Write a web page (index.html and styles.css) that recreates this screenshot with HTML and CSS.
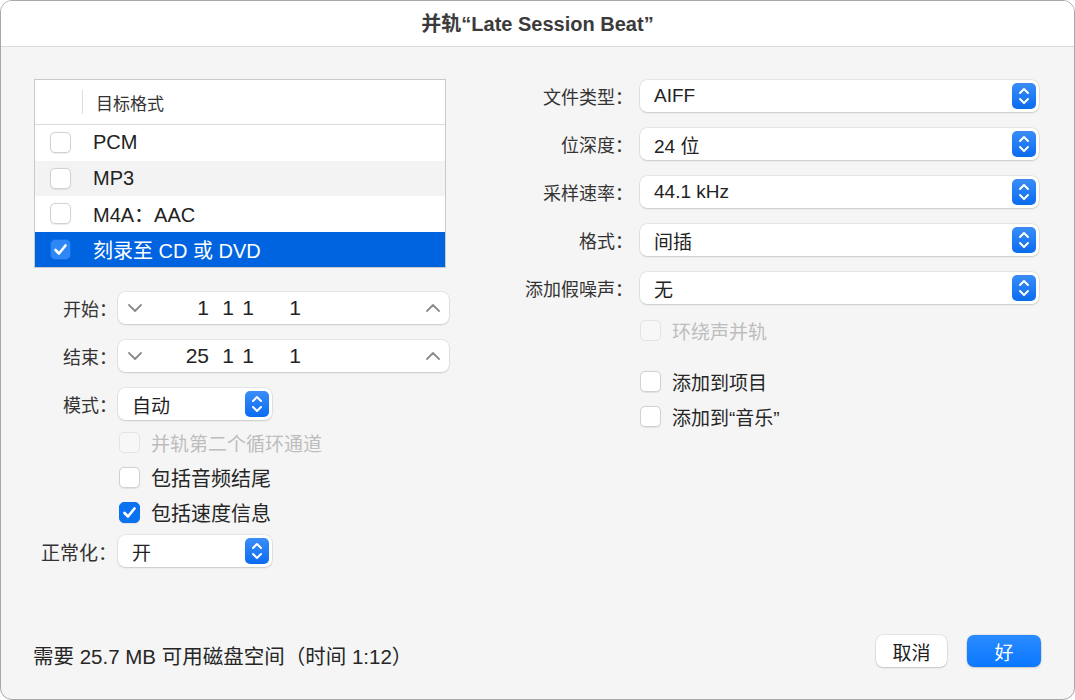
FILE: index.html
```html
<!DOCTYPE html>
<html lang="zh-CN">
<head>
  <meta charset="UTF-8" />
  <title>并轨</title>
  <link rel="stylesheet" href="styles.css">
</head>
<body>
  <div class="window">
    <div class="titlebar">并轨“Late Session Beat”</div>

    <div class="content">
      <div class="left">
        <div class="table">
          <div class="table-head">
            <span class="sep"></span>
            <span>目标格式</span>
          </div>
          <div class="row"><span class="check"></span>PCM</div>
          <div class="row alt"><span class="check"></span>MP3</div>
          <div class="row"><span class="check"></span>M4A：AAC</div>
          <div class="row selected">
            <span class="check on">
              <svg width="21" height="21" viewBox="0 0 21 21"><path d="M5.5 11 L9 14.5 L15.5 6.5" fill="none" stroke="#fff" stroke-width="2.6" stroke-linecap="round" stroke-linejoin="round"/></svg>
            </span>刻录至 CD 或 DVD
          </div>
        </div>

        <div class="form">
          <label>开始：</label>
          <div class="stepper">
            <svg class="chev" width="14" height="8" viewBox="0 0 14 8"><path d="M1 1 L7 7 L13 1" fill="none" stroke="#8c8c8c" stroke-width="1.8" stroke-linecap="round" stroke-linejoin="round"/></svg>
            <span class="num bar">1</span><span class="num beat">1</span><span class="num div">1</span><span class="num tick">1</span>
            <svg class="chev up" width="14" height="8" viewBox="0 0 14 8"><path d="M1 7 L7 1 L13 7" fill="none" stroke="#8c8c8c" stroke-width="1.8" stroke-linecap="round" stroke-linejoin="round"/></svg>
          </div>

          <label>结束：</label>
          <div class="stepper">
            <svg class="chev" width="14" height="8" viewBox="0 0 14 8"><path d="M1 1 L7 7 L13 1" fill="none" stroke="#8c8c8c" stroke-width="1.8" stroke-linecap="round" stroke-linejoin="round"/></svg>
            <span class="num bar">25</span><span class="num beat">1</span><span class="num div">1</span><span class="num tick">1</span>
            <svg class="chev up" width="14" height="8" viewBox="0 0 14 8"><path d="M1 7 L7 1 L13 7" fill="none" stroke="#8c8c8c" stroke-width="1.8" stroke-linecap="round" stroke-linejoin="round"/></svg>
          </div>

          <label>模式：</label>
          <div class="popup short">
            <span>自动</span>
            <span class="arrows"><svg width="24" height="26" viewBox="0 0 24 26"><path d="M8 10 L12 6 L16 10 M8 16 L12 20 L16 16" fill="none" stroke="#fff" stroke-width="2" stroke-linecap="round" stroke-linejoin="round"/></svg></span>
          </div>
        </div>

        <div class="checks">
          <div class="cb disabled"><span class="check"></span>并轨第二个循环通道</div>
          <div class="cb big"><span class="check"></span>包括音频结尾</div>
          <div class="cb big">
            <span class="check on"><svg width="21" height="21" viewBox="0 0 21 21"><path d="M5.5 11 L9 14.5 L15.5 6.5" fill="none" stroke="#fff" stroke-width="2.6" stroke-linecap="round" stroke-linejoin="round"/></svg></span>包括速度信息
          </div>
        </div>

        <div class="form norm">
          <label>正常化：</label>
          <div class="popup short">
            <span>开</span>
            <span class="arrows"><svg width="24" height="26" viewBox="0 0 24 26"><path d="M8 10 L12 6 L16 10 M8 16 L12 20 L16 16" fill="none" stroke="#fff" stroke-width="2" stroke-linecap="round" stroke-linejoin="round"/></svg></span>
          </div>
        </div>
      </div>

      <div class="right">
        <div class="form wide">
          <label>文件类型：</label>
          <div class="popup">
            <span>AIFF</span>
            <span class="arrows"><svg width="24" height="26" viewBox="0 0 24 26"><path d="M8 10 L12 6 L16 10 M8 16 L12 20 L16 16" fill="none" stroke="#fff" stroke-width="2" stroke-linecap="round" stroke-linejoin="round"/></svg></span>
          </div>

          <label>位深度：</label>
          <div class="popup">
            <span>24 位</span>
            <span class="arrows"><svg width="24" height="26" viewBox="0 0 24 26"><path d="M8 10 L12 6 L16 10 M8 16 L12 20 L16 16" fill="none" stroke="#fff" stroke-width="2" stroke-linecap="round" stroke-linejoin="round"/></svg></span>
          </div>

          <label>采样速率：</label>
          <div class="popup">
            <span>44.1 kHz</span>
            <span class="arrows"><svg width="24" height="26" viewBox="0 0 24 26"><path d="M8 10 L12 6 L16 10 M8 16 L12 20 L16 16" fill="none" stroke="#fff" stroke-width="2" stroke-linecap="round" stroke-linejoin="round"/></svg></span>
          </div>

          <label>格式：</label>
          <div class="popup">
            <span>间插</span>
            <span class="arrows"><svg width="24" height="26" viewBox="0 0 24 26"><path d="M8 10 L12 6 L16 10 M8 16 L12 20 L16 16" fill="none" stroke="#fff" stroke-width="2" stroke-linecap="round" stroke-linejoin="round"/></svg></span>
          </div>

          <label>添加假噪声：</label>
          <div class="popup">
            <span>无</span>
            <span class="arrows"><svg width="24" height="26" viewBox="0 0 24 26"><path d="M8 10 L12 6 L16 10 M8 16 L12 20 L16 16" fill="none" stroke="#fff" stroke-width="2" stroke-linecap="round" stroke-linejoin="round"/></svg></span>
          </div>
        </div>

        <div class="checks right-checks">
          <div class="cb disabled"><span class="check"></span>环绕声并轨</div>
          <div class="cb spaced"><span class="check"></span>添加到项目</div>
          <div class="cb"><span class="check"></span>添加到“音乐”</div>
        </div>
      </div>
    </div>

    <div class="footer">
      <div class="space-info">需要 25.7 MB 可用磁盘空间（时间 1:12）</div>
      <div class="buttons">
        <button class="btn">取消</button>
        <button class="btn primary">好</button>
      </div>
    </div>
  </div>
</body>
</html>
```

FILE: styles.css
```css
* {
  margin: 0;
  padding: 0;
  box-sizing: border-box;
  font-family: "Liberation Sans", "Noto Sans CJK SC", sans-serif;
}
body {
  background: #ffffff;
  color: #262626;
}
.window {
  width: 1075px;
  height: 700px;
  border: 1px solid #a8a8a8;
  border-radius: 12px;
  overflow: hidden;
  background: #f5f5f5;
  display: flex;
  flex-direction: column;
}
.titlebar {
  height: 46px;
  padding-bottom: 3px;
  background: #ffffff;
  border-bottom: 1px solid #d9d9d9;
  display: flex;
  align-items: center;
  justify-content: center;
  font-size: 20px;
  font-weight: bold;
  color: #3b3b3b;
}
.content {
  flex: 1;
  display: flex;
  padding: 32px 35px 0 33px;
}
.left {
  width: 415px;
}
.right {
  flex: 1;
  padding-left: 16px;
}

/* format table */
.table {
  width: 412px;
  border: 1px solid #c9c9c9;
  background: #ffffff;
}
.table-head {
  height: 45px;
  border-bottom: 1px solid #dcdcdc;
  display: flex;
  align-items: center;
  font-size: 17px;
  color: #333;
}
.table-head .sep {
  width: 1px;
  height: 24px;
  background: #dcdcdc;
  margin: 0 13px 0 47px;
}
.row {
  height: 35.5px;
  display: flex;
  align-items: center;
  padding-left: 15px;
  font-size: 20px;
  color: #222;
}
.row .check {
  margin-right: 22px;
}
.row.alt {
  background: #f3f3f3;
}
.row.selected {
  background: #0064e0;
  color: #ffffff;
}
.row.selected .check.on {
  background: #2f86f5;
}

/* checkboxes */
.check {
  width: 21px;
  height: 21px;
  border-radius: 5px;
  background: #ffffff;
  border: 1px solid #d2d2d2;
  box-shadow: 0 0.5px 1px rgba(0, 0, 0, 0.08);
  display: inline-flex;
  flex-shrink: 0;
}
.check.on {
  background: #0a72f0;
  border-color: #0a72f0;
}
.check.on svg {
  margin: -1px;
}
.checks {
  padding-left: 85px;
  display: flex;
  flex-direction: column;
  gap: 14px;
  margin: 12px 0;
}
.cb {
  display: flex;
  align-items: center;
  gap: 11px;
  font-size: 19px;
  color: #262626;
  height: 21px;
}
.cb.big {
  font-size: 20px;
}
.cb.disabled {
  color: #bdbdbd;
}
.cb.disabled .check {
  background: #f7f7f7;
  border-color: #e3e3e3;
  box-shadow: none;
}

/* label + control grid */
.form {
  display: grid;
  grid-template-columns: 83px 1fr;
  column-gap: 1px;
  row-gap: 16px;
  align-items: center;
  margin-top: 24px;
}
.form.norm {
  margin-top: 0;
}
.form.norm label {
  font-size: 19px;
}
.form.wide {
  grid-template-columns: 1fr 399px;
  column-gap: 7px;
  margin-top: 1px;
}
.form label {
  text-align: right;
  font-size: 18px;
  color: #333;
  white-space: nowrap;
}
.stepper,
.popup {
  height: 32px;
  background: #ffffff;
  border-radius: 7px;
  box-shadow: 0 0 0 0.5px rgba(0, 0, 0, 0.12), 0 1px 2px rgba(0, 0, 0, 0.12);
  display: flex;
  align-items: center;
  font-size: 19px;
  color: #222;
}
.stepper {
  width: 331px;
  padding: 0 9px 0 10px;
  font-size: 21px;
}
.chev {
  flex-shrink: 0;
}
.num {
  display: inline-block;
  text-align: right;
}
.num.bar { width: 67px; }
.num.beat { width: 25px; }
.num.div { width: 20px; }
.num.tick { width: 47px; }
.chev.up {
  margin-left: auto;
}
.popup {
  padding: 0 3px 0 14px;
  justify-content: space-between;
}
.popup.short {
  width: 154px;
}
.arrows {
  width: 24px;
  height: 26px;
  border-radius: 5px;
  background: linear-gradient(#3b8df8, #0a6cf0);
  display: flex;
}
.right-checks {
  padding-left: 0;
  margin: 16px 0 0 calc(100% - 399px);
}
.cb.spaced {
  margin-top: 16px;
}

/* footer */
.footer {
  display: flex;
  align-items: flex-end;
  justify-content: space-between;
  padding: 0 33px 32px 32px;
}
.space-info {
  font-size: 20.5px;
  color: #262626;
  margin-bottom: -3px;
}
.buttons {
  display: flex;
  gap: 20px;
}
.btn {
  height: 32px;
  border: none;
  border-radius: 7px;
  background: #ffffff;
  box-shadow: 0 0 0 0.5px rgba(0, 0, 0, 0.12), 0 1px 2px rgba(0, 0, 0, 0.15);
  font-size: 19px;
  color: #222;
  width: 71px;
}
.btn.primary {
  width: 74px;
  background: linear-gradient(#2a8bff, #0a78ff);
  color: #ffffff;
}
```
